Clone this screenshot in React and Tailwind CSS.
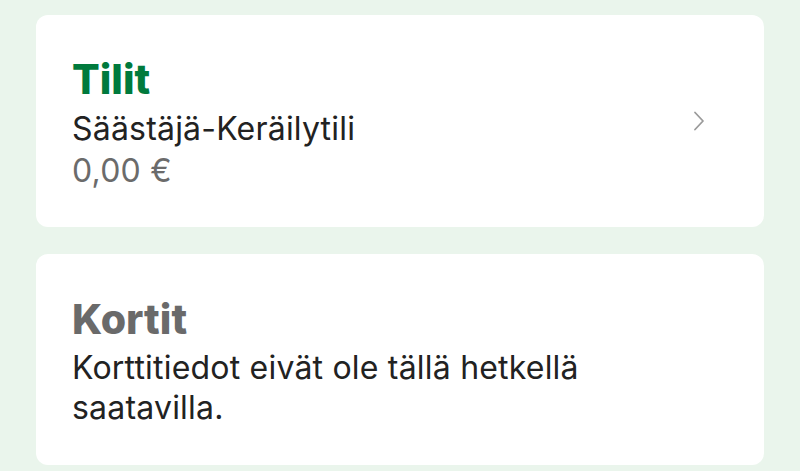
export default function App() {
  return (
    <div
      className="w-[800px] h-[471px] overflow-hidden bg-[#eaf5ec] px-9 pt-[15px] flex flex-col gap-[27px]"
      style={{ fontFamily: "Inter, 'Noto Sans', sans-serif" }}
    >
      {/* Accounts card */}
      <div className="h-[212px] shrink-0 rounded-[12px] bg-white pl-9 pr-[59px] flex items-stretch justify-between">
        <div className="flex flex-col pt-[42px]">
          <div className="text-[41px] leading-[44px] font-extrabold text-[#007a3d]">Tilit</div>
          <div className="mt-[7px] text-[32px] leading-[42px] tracking-[0.2px] text-[#222]">Säästäjä-Keräilytili</div>
          <div className="text-[32px] leading-[42px] tracking-[0.2px] text-[#6b6b6b]">0,00 €</div>
        </div>
        <svg width="12" height="20" viewBox="0 0 12 20" className="self-center" fill="none">
          <path d="M2 1.5 L10 10 L2 18.5" stroke="#9a9a9a" strokeWidth="1.8" strokeLinecap="round" strokeLinejoin="round" />
        </svg>
      </div>

      {/* Cards card */}
      <div className="h-[211px] shrink-0 rounded-[12px] bg-white pl-9 pr-9 pt-[43px] flex flex-col">
        <div className="text-[41px] leading-[44px] font-extrabold text-[#6a6a6a]">Kortit</div>
        <div className="mt-[7px] text-[32px] leading-[40px] tracking-[0.2px] text-[#222] w-[560px]">
          Korttitiedot eivät ole tällä hetkellä saatavilla.
        </div>
      </div>
    </div>
  );
}
